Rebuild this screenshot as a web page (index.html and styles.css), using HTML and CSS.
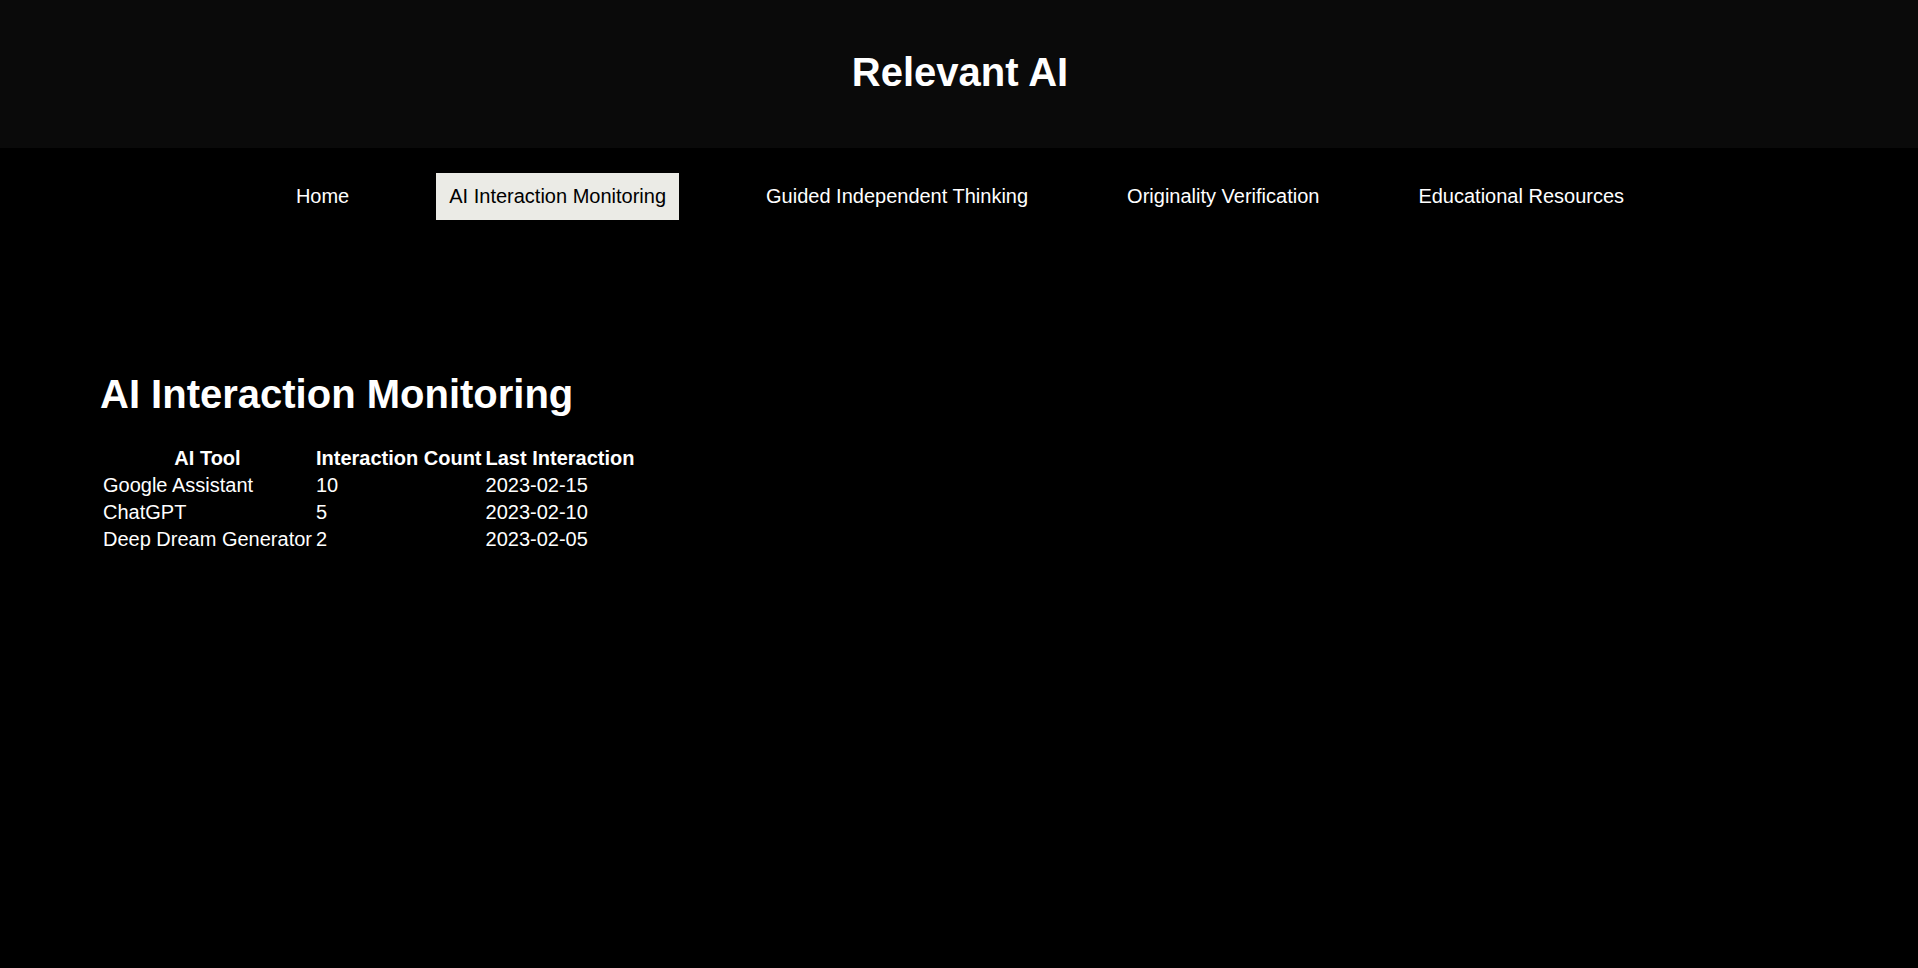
FILE: index.html
```html
<!DOCTYPE html>
<html lang="en">
<head>
<meta charset="utf-8">
<title>Relevant AI</title>
<link rel="stylesheet" href="styles.css">
</head>
<body>
<header class="site-header">
  <h1 class="brand">Relevant AI</h1>
</header>
<nav class="main-nav">
  <ul class="nav-list">
    <li><a class="nav-link" href="#">Home</a></li>
    <li><a class="nav-link active" href="#">AI Interaction Monitoring</a></li>
    <li><a class="nav-link" href="#">Guided Independent Thinking</a></li>
    <li><a class="nav-link" href="#">Originality Verification</a></li>
    <li><a class="nav-link" href="#">Educational Resources</a></li>
  </ul>
</nav>
<main class="content">
  <section class="monitor">
    <h2 class="section-title">AI Interaction Monitoring</h2>
    <table class="data-table">
      <thead>
        <tr><th>AI Tool</th><th>Interaction Count</th><th>Last Interaction</th></tr>
      </thead>
      <tbody>
        <tr><td>Google Assistant</td><td>10</td><td>2023-02-15</td></tr>
        <tr><td>ChatGPT</td><td>5</td><td>2023-02-10</td></tr>
        <tr><td>Deep Dream Generator</td><td>2</td><td>2023-02-05</td></tr>
      </tbody>
    </table>
  </section>
</main>
</body>
</html>
```
FILE: styles.css
```css
html, body {
  margin: 0;
  padding: 0;
  background: #000;
  color: #fff;
  font-family: "Liberation Sans", Arial, sans-serif;
}

.site-header {
  background: #0a0a0a;
  padding: 49px 0 53px 2px;
  text-align: center;
}

.brand {
  margin: 0;
  font-size: 40px;
  font-weight: bold;
  line-height: 46px;
}

.main-nav {
  padding: 25px 0 25px 2px;
}

.nav-list {
  list-style: none;
  margin: 0;
  padding: 0;
  display: flex;
  justify-content: center;
  gap: 75px;
}

.nav-link {
  display: block;
  padding: 12px;
  font-size: 20px;
  line-height: 23px;
  color: #fff;
  text-decoration: none;
}

.nav-link.active {
  background: #ebebe6;
  color: #000;
  padding: 12px 13px;
}

.content {
  padding: 100px 100px;
}

.section-title {
  font-size: 40px;
  line-height: 46px;
  margin: 26px 0 27px;
}

.data-table {
  font-size: 20px;
  color: #fff;
}

.data-table th {
  font-weight: bold;
}
```
